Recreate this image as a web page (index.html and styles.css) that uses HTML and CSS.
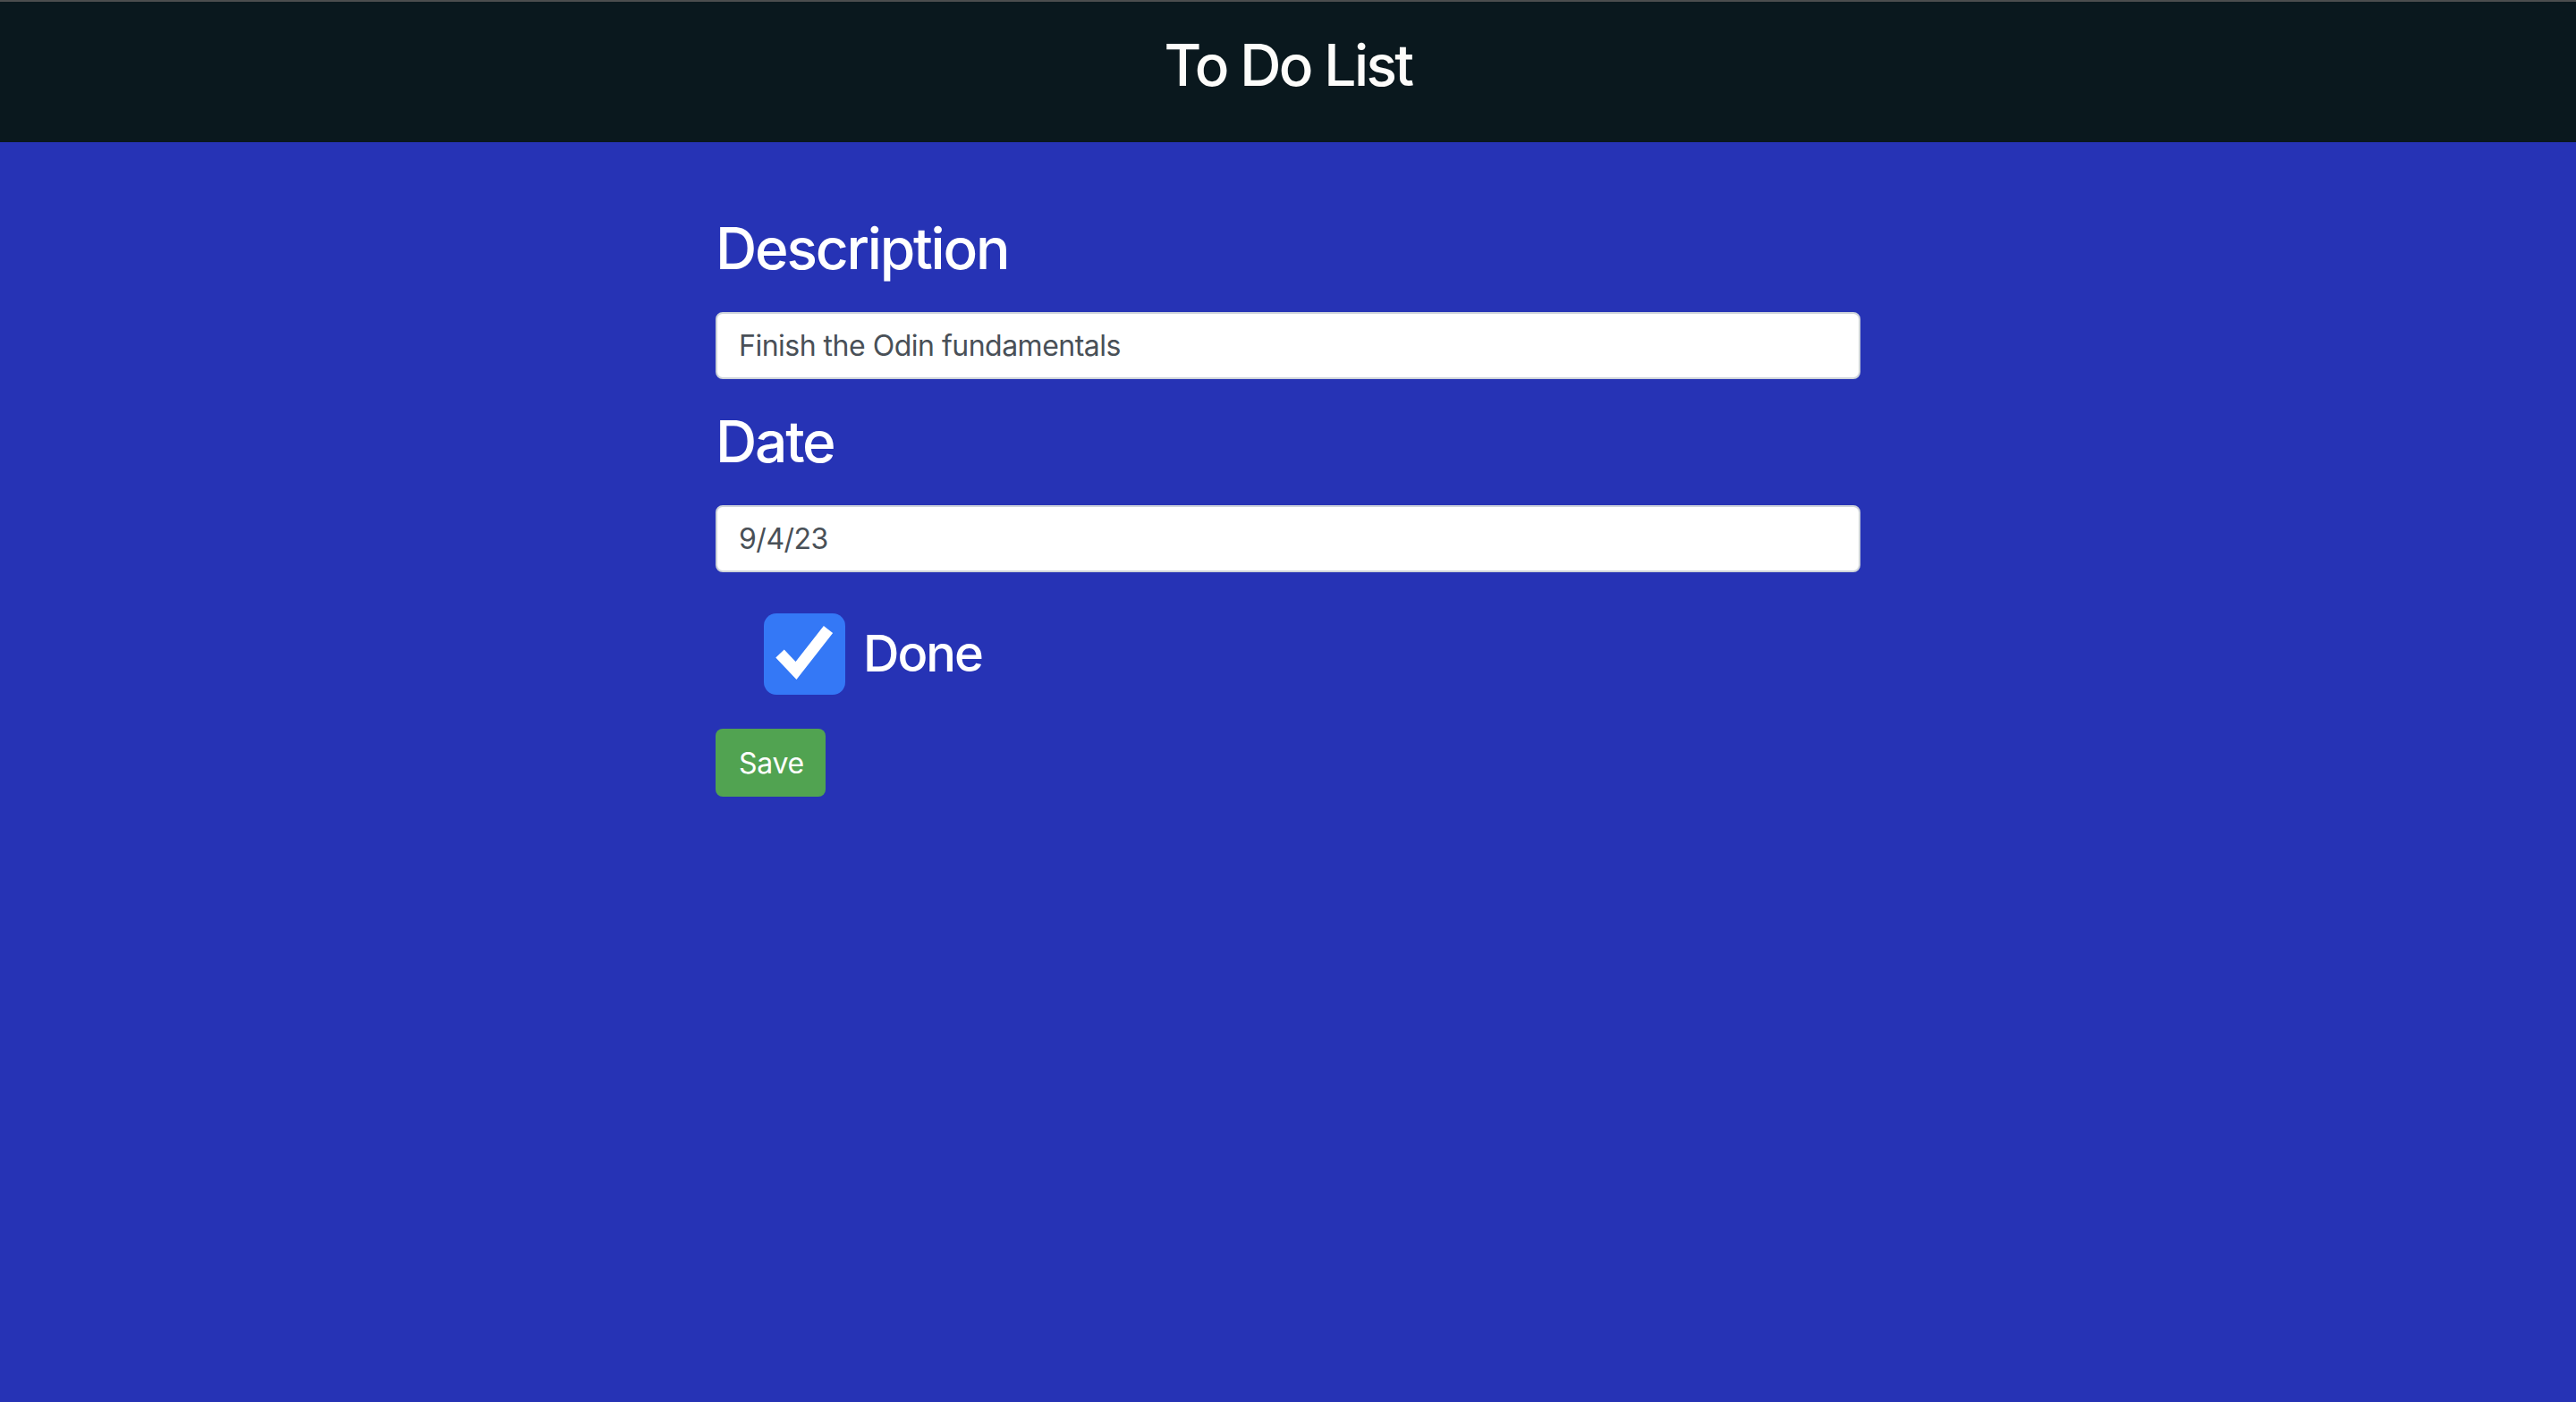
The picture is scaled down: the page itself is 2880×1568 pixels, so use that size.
FILE: index.html
```html
<!DOCTYPE html>
<html lang="en">
<head>
<meta charset="utf-8">
<title>To Do List</title>
<link rel="stylesheet" href="styles.css">
</head>
<body>
<header class="topbar">
  <h1 class="title">To Do List</h1>
</header>
<main class="form">
  <h2 class="label">Description</h2>
  <div class="field">Finish the Odin fundamentals</div>
  <h2 class="label">Date</h2>
  <div class="field">9/4/23</div>
  <div class="check-row">
    <span class="checkbox">
      <svg viewBox="0 0 91 91" width="91" height="91"><polyline points="18,45 36,64 72,18" fill="none" stroke="#fff" stroke-width="13" stroke-linejoin="miter" stroke-linecap="butt"/></svg>
    </span>
    <span class="check-label">Done</span>
  </div>
  <button class="save">Save</button>
</main>
</body>
</html>
```
FILE: styles.css
```css
html, body {
  margin: 0;
  padding: 0;
}
body {
  background: #2633b5;
  font-family: Inter, "Noto Sans", "Liberation Sans", sans-serif;
  min-height: 1568px;
}
.topbar {
  box-sizing: border-box;
  height: 159px;
  border-top: 2px solid #4b4d4e;
  background: #0a181e;
  padding-top: 33px;
  text-align: center;
}
.title {
  margin: 0;
  font-size: 64px;
  font-weight: 500;
  line-height: 1.2;
  color: #fdfcfa;
  letter-spacing: -2.6px;
}
.form {
  width: 1280px;
  margin: 0 auto;
  padding-top: 81px;
  display: flex;
  flex-direction: column;
  align-items: flex-start;
}
.label {
  margin: 0 0 32px 0;
  font-size: 64px;
  font-weight: 500;
  line-height: 1.2;
  color: #ffffff;
  letter-spacing: -2.2px;
}
.field {
  box-sizing: border-box;
  width: 1280px;
  height: 75px;
  margin-bottom: 32px;
  padding: 0 24px;
  display: flex;
  align-items: center;
  background: #ffffff;
  border: 2px solid #ced4da;
  border-radius: 8px;
  font-size: 32px;
  color: #495057;
  letter-spacing: -0.5px;
}
.check-row {
  display: flex;
  align-items: center;
  gap: 20px;
  margin: 14px 0 0 54px;
}
.checkbox {
  width: 91px;
  height: 91px;
  border-radius: 14px;
  background: #3478f6;
  display: block;
}
.checkbox svg {
  display: block;
}
.check-label {
  font-size: 56px;
  font-weight: 500;
  color: #ffffff;
  letter-spacing: -2px;
}
.save {
  margin-top: 38px;
  height: 76px;
  padding: 2px 24px 0 26px;
  border: none;
  border-radius: 8px;
  background: #51a351;
  color: #ffffff;
  font-family: inherit;
  font-size: 32px;
  font-weight: 400;
  letter-spacing: -0.3px;
}
```
